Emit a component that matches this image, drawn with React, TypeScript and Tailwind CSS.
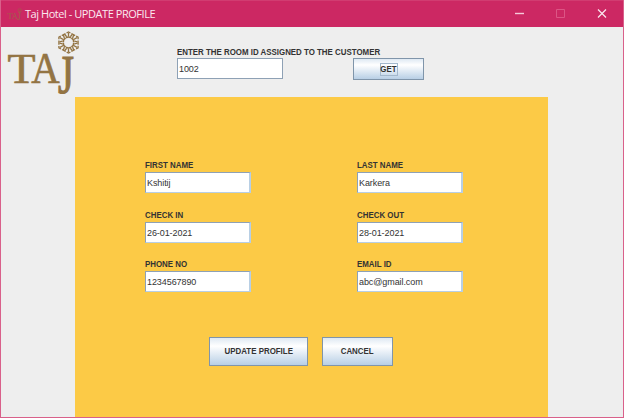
import React from "react";

function Flower() {
  return (
    <g transform="translate(60.5 15.5)" fill="none" stroke="#937443">
      <path d="M0-10.6 9.6-5.3V5.3L0 10.6-9.6 5.3V-5.3Z" strokeWidth="1.3" strokeDasharray="4.2 1.2" strokeDashoffset="2" />
      {[0, 60, 120, 180, 240, 300].map((angle) => (
        <g key={angle} transform={`rotate(${angle})`}>
          <path d="M0-6V-9.8M-1.8-5.8-3.9-8.2M1.8-5.8 3.9-8.2" strokeWidth="1.3" />
          <path d="M-2.4-4.6Q0-6.4 2.4-4.6" strokeWidth="1.5" />
        </g>
      ))}
    </g>
  );
}

function TajLogo({ className, flower = true }: { className: string; flower?: boolean }) {
  return (
    <svg className={`overflow-visible ${className}`} viewBox="0 0 70 68" fill="#937443" stroke="#937443" strokeWidth=".6" fontFamily="'Liberation Serif', serif">
      <text transform="translate(-.5 56) scale(1.12 1.02)" fontSize="41">T</text>
      <text transform="translate(23.2 56) scale(.96 1.06)" fontSize="41">A</text>
      <text transform="translate(50 65.5) scale(1 1.36)" fontSize="41" strokeWidth=".9">J</text>
      {flower ? <Flower /> : <circle cx="60.5" cy="16" r="8" fill="none" strokeWidth="4" />}
    </svg>
  );
}

const boldText = "inline-block origin-left scale-x-[0.86] whitespace-nowrap text-[9.2px] font-bold leading-[10px] text-[#333]";

function Field({ label, value }: { label: string; value: string }) {
  return (
    <div className="h-[49.5px] w-[106px]">
      <div className="flex h-[12px] items-start">
        <span className={boldText}>{label}</span>
      </div>
      <input
        className="block h-[21px] w-[106px] border border-r-2 border-[#8ea1b5] border-b-[#b8cfe5] border-r-[#b8cfe5] bg-white pl-px pt-px text-[9px] tracking-[-0.08px] text-[#333] outline-none"
        defaultValue={value}
      />
    </div>
  );
}

const buttonStyle =
  "flex items-center justify-center border border-[#8095aa] bg-linear-to-b from-[#dfe9f3] via-white via-30% to-[#b8cfe5]";
const buttonText = "block scale-x-[0.86] whitespace-nowrap text-[9.2px] font-bold leading-[10px] text-[#333]";

export default function App() {
  return (
    <div className="flex h-[418px] w-[624px] flex-col overflow-hidden border border-t-0 border-[#d9608a] bg-[#eee] font-['Liberation_Sans',Arial,sans-serif]">
      <header className="-mx-px flex h-[27px] shrink-0 items-center border-t border-[#d13c71] bg-[#cc2863] pl-[7px]">
        <TajLogo className="h-[14px] w-[15px] opacity-60" flower={false} />
        <h1 className="ml-[3px] whitespace-nowrap pb-[2px] font-['Open_Sans',sans-serif] text-[11px] leading-none tracking-[-0.45px] text-[#fbe9f0]">Taj Hotel - UPDATE PROFILE</h1>
        <svg className="ml-auto h-[26px] w-[124px]" viewBox="0 0 124 26" fill="none">
          <path d="M15 12.5H24" stroke="#f5c9d9" strokeWidth="1.4" />
          <path d="M56.5 8.5H64.5V16.5H56.5Z" stroke="#dc5585" />
          <path d="m98 8.5 8 8m0-8-8 8" stroke="#fbe9f0" strokeWidth="1.2" />
        </svg>
      </header>
      <section className="flex h-[70px] shrink-0">
        <TajLogo className="ml-[7px] h-[68px] w-[70px] shrink-0" />
        <div className="ml-[99px] mt-[20px] w-[176px]">
          <label className="flex h-[11px] items-start">
            <span className={boldText}>ENTER THE ROOM ID ASSIGNED TO THE CUSTOMER</span>
          </label>
          <input
            className="block h-[21px] w-[106px] border border-[#8ea1b5] bg-white pl-px pt-px text-[9px] tracking-[-0.08px] text-[#333] outline-none"
            defaultValue="1002"
          />
        </div>
        <button className={`${buttonStyle} mt-[31px] h-[22px] w-[71px]`}>
          <span className="flex h-[13px] w-[18px] items-center justify-center border border-[#a3b8cc]">
            <span className={buttonText}>GET</span>
          </span>
        </button>
      </section>
      <main className="ml-[74px] flex w-[473px] flex-1 flex-col bg-[#fcca46] pt-[63px]">
        <div className="ml-[70px] grid grid-cols-[212px_106px]">
          <Field label="FIRST NAME" value="Kshitij" />
          <Field label="LAST NAME" value="Karkera" />
          <Field label="CHECK IN" value="26-01-2021" />
          <Field label="CHECK OUT" value="28-01-2021" />
          <Field label="PHONE NO" value="1234567890" />
          <Field label="EMAIL ID" value="abc@gmail.com" />
        </div>
        <div className="ml-[134px] mt-[28px] flex gap-[14px]">
          <button className={`${buttonStyle} h-[29px] w-[99px]`}>
            <span className={buttonText}>UPDATE PROFILE</span>
          </button>
          <button className={`${buttonStyle} h-[29px] w-[71px]`}>
            <span className={buttonText}>CANCEL</span>
          </button>
        </div>
      </main>
    </div>
  );
}
